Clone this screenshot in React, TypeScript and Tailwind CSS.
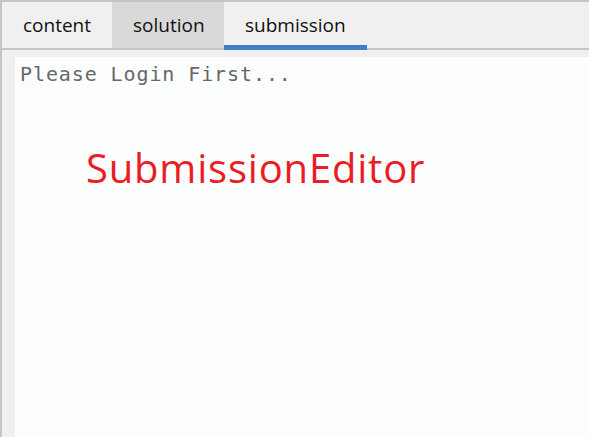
import React from "react";

export default function App() {
  return (
    <div className="w-[589px] h-[437px] overflow-hidden bg-[#f0f0f0] border-t-2 border-l-2 border-[#c4c4c4] flex flex-col">
      <div className="flex h-[48px] border-b-2 border-[#c4c4c4] shrink-0" style={{ fontFamily: '"Open Sans", sans-serif' }}>
        <div className="h-[46px] px-[21px] flex items-center text-[19px] text-[#111] bg-[#f0f0f0] w-[110px]">content</div>
        <div className="h-[46px] px-[21px] flex items-center text-[19px] text-[#111] bg-[#d9d9d9] w-[112px]">solution</div>
        <div className="h-[48px] px-[21px] flex items-start pt-[9px] text-[19px] text-[#111] bg-[#f0f0f0] w-[143px] border-b-[5px] border-[#3f7fc8] -mb-[2px] box-border">submission</div>
      </div>
      <div className="flex-1 pt-[7px] pl-[13px] flex">
        <div className="flex-1 bg-[#fcfefe] flex flex-col">
          <div
            className="pl-[5px] pt-[5px] text-[20px] leading-[24px] text-[#676767] tracking-[0.9px]"
            style={{ fontFamily: '"DejaVu Sans Mono", monospace' }}
          >
            Please Login First...
          </div>
          <div
            className="pl-[71px] mt-[58px] text-[40px] leading-[48px] text-[#ed1c24] tracking-[0.8px]"
            style={{ fontFamily: '"Open Sans", sans-serif' }}
          >
            SubmissionEditor
          </div>
        </div>
      </div>
    </div>
  );
}
